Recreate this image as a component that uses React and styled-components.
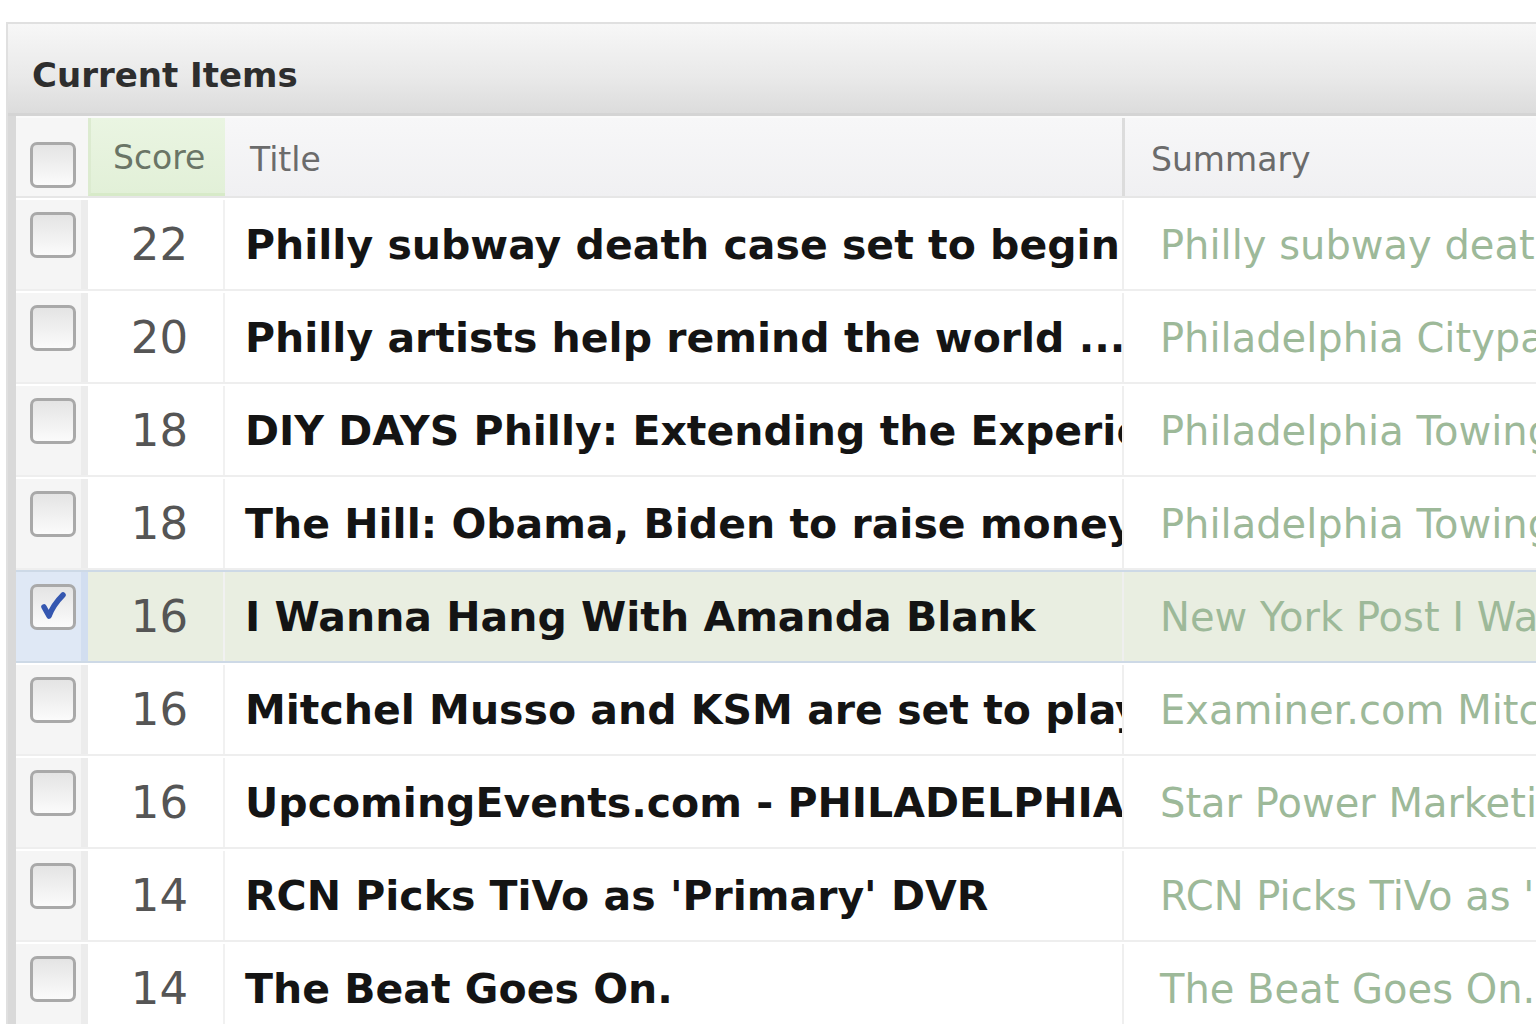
import styled, { createGlobalStyle } from 'styled-components';

const GlobalStyle = createGlobalStyle`
  html, body {
    margin: 0;
    padding: 0;
    background: #fff;
    overflow: hidden;
  }
  body {
    font-family: "DejaVu Sans", "Liberation Sans", sans-serif;
  }
`;

const items = [
  { score: 22, title: 'Philly subway death case set to begin', summary: 'Philly subway death case set to begin in court' },
  { score: 20, title: 'Philly artists help remind the world ...', summary: 'Philadelphia Citypaper Philly artists help' },
  { score: 18, title: 'DIY DAYS Philly: Extending the Experience', summary: 'Philadelphia Towing DIY DAYS Philly' },
  { score: 18, title: 'The Hill: Obama, Biden to raise money in Philly', summary: 'Philadelphia Towing The Hill: Obama' },
  { score: 16, title: 'I Wanna Hang With Amanda Blank', summary: 'New York Post I Wanna Hang With Amanda', checked: true },
  { score: 16, title: 'Mitchel Musso and KSM are set to play', summary: 'Examiner.com Mitchel Musso and KSM' },
  { score: 16, title: 'UpcomingEvents.com - PHILADELPHIA, PA', summary: 'Star Power Marketing UpcomingEvents' },
  { score: 14, title: "RCN Picks TiVo as 'Primary' DVR", summary: "RCN Picks TiVo as 'Primary' DVR" },
  { score: 14, title: 'The Beat Goes On.', summary: 'The Beat Goes On.' },
];

const COLS = '72px 137px 897px 700px';

const CheckBox = ({ checked }) => (
  <Box>
    {checked && (
      <svg width="32" height="32" viewBox="0 0 32 32">
        <path
          d="M7 16 L12 25 C15 17 20 10 26 4"
          fill="none"
          stroke="#3557b0"
          strokeWidth="5.5"
          strokeLinecap="round"
          strokeLinejoin="round"
        />
      </svg>
    )}
  </Box>
);

const App = () => {
  return (
    <>
      <GlobalStyle />
      <Page>
        <Panel>
          <PanelHeader>Current Items</PanelHeader>
          <Body>
            <HeaderRow>
              <CheckHead>
                <CheckBox />
              </CheckHead>
              <HeadCell sorted>Score</HeadCell>
              <HeadCell>Title</HeadCell>
              <HeadCell divider>Summary</HeadCell>
            </HeaderRow>
            {items.map((item, i) => (
              <Row key={i} selected={item.checked}>
                <CheckCell selected={item.checked}>
                  <CheckBox checked={item.checked} />
                </CheckCell>
                <ScoreCell>{item.score}</ScoreCell>
                <TitleCell>{item.title}</TitleCell>
                <SummaryCell>{item.summary}</SummaryCell>
              </Row>
            ))}
          </Body>
        </Panel>
      </Page>
    </>
  );
};

const Page = styled.div`
  padding: 22px 0 0 6px;
  width: 1900px;
`;

const Panel = styled.div`
  border: 2px solid #e0e0e0;
  border-right: 0;
  border-bottom: 0;
  background: #fff;
`;

const PanelHeader = styled.div`
  height: 92px;
  box-sizing: border-box;
  display: flex;
  align-items: center;
  padding: 12px 0 0 24px;
  background: linear-gradient(#f7f7f7, #e9e9e9 60%, #dcdcdc);
  border-bottom: 3px solid #d4d4d4;
  color: #2e2e2e;
  font-weight: bold;
  font-size: 34px;
`;

const Body = styled.div`
  border-left: 8px solid #d9d9d9;
`;

const HeaderRow = styled.div`
  display: grid;
  grid-template-columns: ${COLS};
  height: 78px;
  background: linear-gradient(#f7f7f8, #f0f0f2);
  border-top: 2px solid #fafafa;
  border-bottom: 2px solid #e6e6e6;
`;

const CheckHead = styled.div`
  padding: 24px 0 0 14px;
  background: #f6f6f6;
`;

const HeadCell = styled.div`
  display: flex;
  align-items: center;
  padding: 4px 0 0 ${p => (p.divider ? '26px' : '22px')};
  font-size: 33px;
  color: ${p => (p.sorted ? '#6a7566' : '#6b6b6b')};
  background: ${p => (p.sorted ? 'linear-gradient(#eaf5e2, #e2f0d8)' : 'transparent')};
  border-left: 3px solid ${p => (p.divider ? '#dcdcdc' : p.sorted ? '#dcebd0' : 'transparent')};
  border-bottom: ${p => (p.sorted ? '3px solid #d7eac8' : '0')};
`;

const Row = styled.div`
  display: grid;
  grid-template-columns: ${COLS};
  height: 93px;
  box-sizing: border-box;
  border-top: 2px solid ${p => (p.selected ? '#cdd9e6' : '#fff')};
  border-bottom: 2px solid ${p => (p.selected ? '#cdd9e6' : '#eeeeee')};
  background: ${p => (p.selected ? '#e9eee1' : '#fff')};
`;

const CheckCell = styled.div`
  padding: 12px 0 0 14px;
  background: ${p => (p.selected ? '#dfe8f5' : '#f5f5f5')};
  border-right: 7px solid ${p => (p.selected ? '#d2def0' : '#ececec')};
  box-sizing: border-box;
`;

const Box = styled.div`
  width: 46px;
  height: 46px;
  box-sizing: border-box;
  border: 3px solid #a9a9a9;
  border-radius: 7px;
  background: linear-gradient(#e4e4e4, #fbfbfb);
  display: flex;
  align-items: center;
  justify-content: center;
`;

const ScoreCell = styled.div`
  display: flex;
  align-items: center;
  justify-content: center;
  padding-left: 8px;
  font-size: 45px;
  color: #555;
  border-right: 2px solid #f1f1f1;
`;

const TitleCell = styled.div`
  display: flex;
  align-items: center;
  padding: 0 4px 0 20px;
  font-size: 41px;
  font-weight: bold;
  color: #141414;
  white-space: nowrap;
  overflow: hidden;
`;

const SummaryCell = styled.div`
  display: flex;
  align-items: center;
  padding-left: 36px;
  font-size: 40px;
  color: #9db999;
  white-space: nowrap;
  overflow: hidden;
  border-left: 2px solid #efefef;
`;

export default App;
